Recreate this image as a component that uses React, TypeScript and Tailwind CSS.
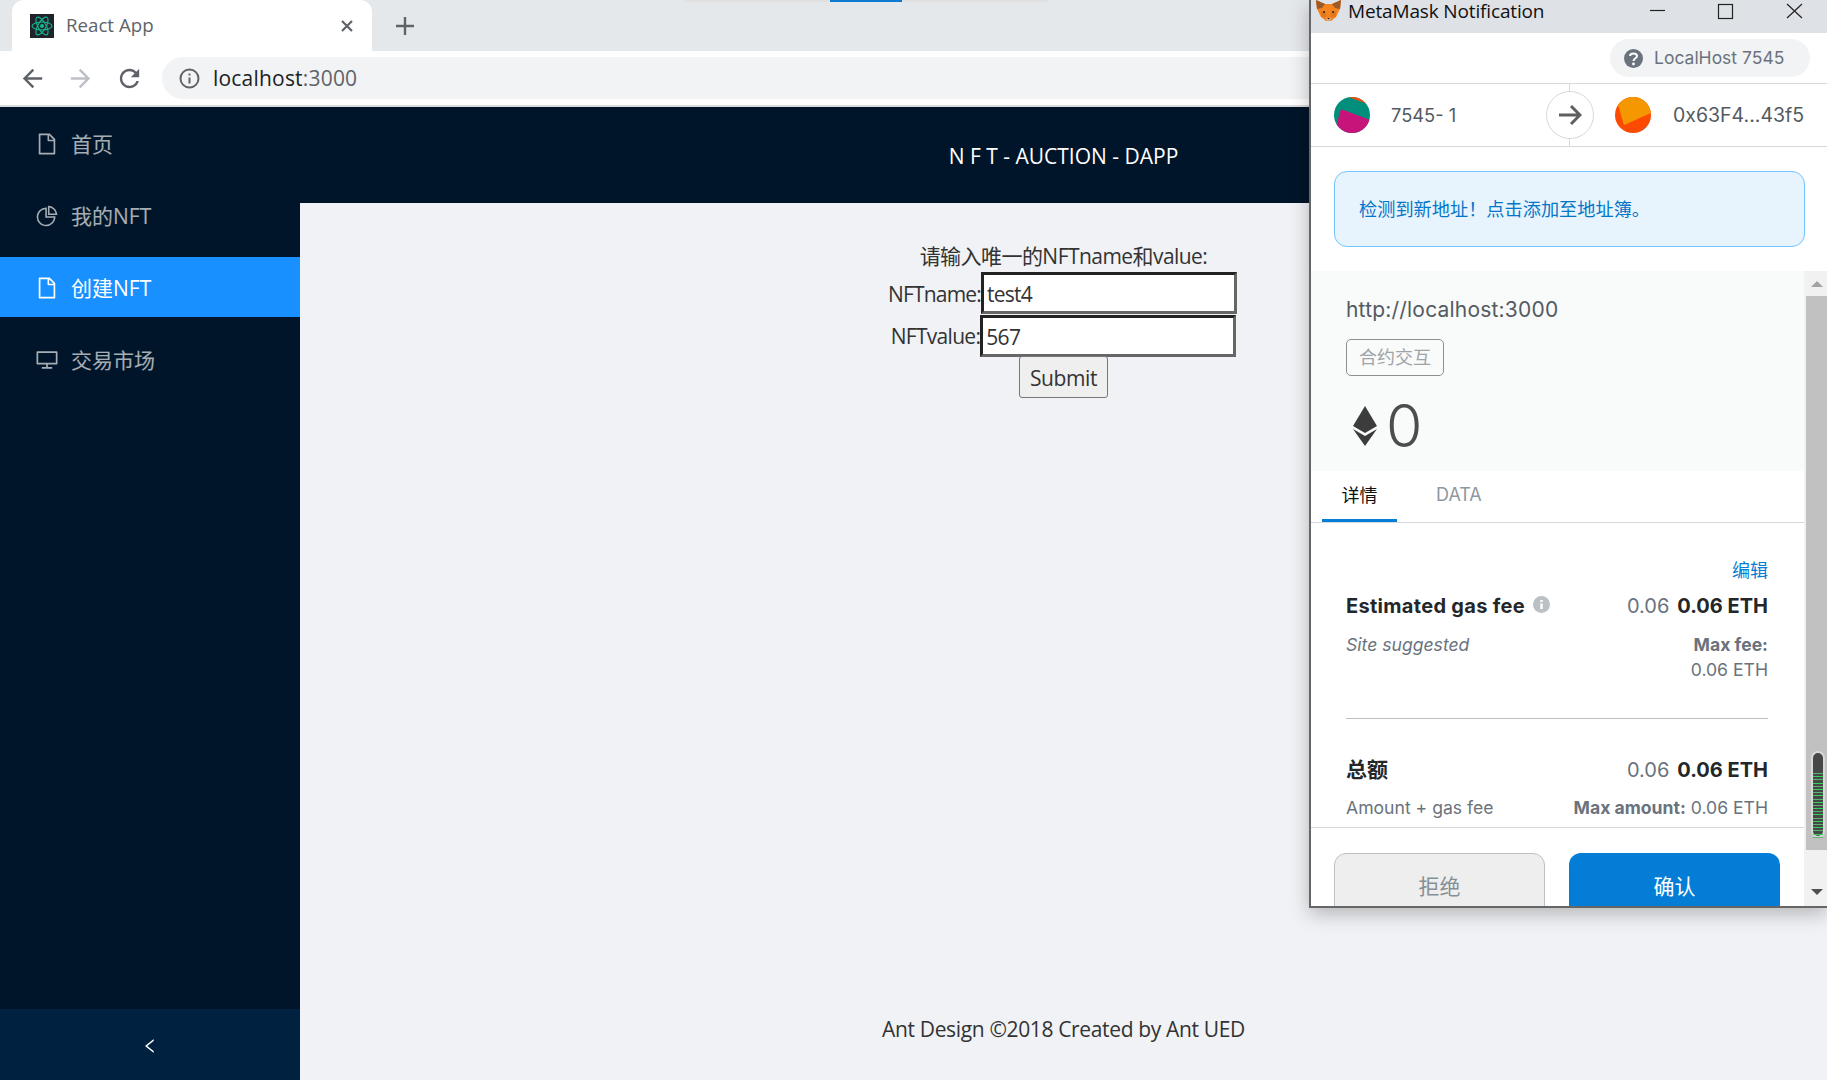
import React from "react";
import { AiOutlineFile, AiOutlinePieChart, AiOutlineDesktop, AiOutlineLeft } from "react-icons/ai";

const ui = "font-['Open_Sans','Noto_Sans_CJK_SC',sans-serif]";
const mm = "font-['Inter','Noto_Sans_CJK_SC',sans-serif]";

function ReactLogo() {
  return (
    <svg width="24" height="24" viewBox="0 0 24 24" className="shrink-0">
      <rect width="24" height="24" fill="#20232a" />
      <g fill="none" stroke="#14b88f" strokeWidth="1.1">
        <ellipse cx="12" cy="12" rx="10" ry="4" />
        <ellipse cx="12" cy="12" rx="10" ry="4" transform="rotate(60 12 12)" />
        <ellipse cx="12" cy="12" rx="10" ry="4" transform="rotate(120 12 12)" />
      </g>
      <circle cx="12" cy="12" r="2" fill="#14b88f" />
    </svg>
  );
}

function Fox() {
  return (
    <svg width="25" height="22" viewBox="0 0 25 22" className="shrink-0">
      <path d="M0 0 L9 4 H16 L25 0 L24 9 L20 17 L15 21 H10 L5 17 L1 9 Z" fill="#f5841f" />
      <path d="M0 0 L9 4 L6 8 L1 9 Z M25 0 L16 4 L19 8 L24 9 Z" fill="#9c5a24" />
      <path d="M5 11 L10 13 L10.5 17 L5 17 Z M20 11 L15 13 L14.5 17 L20 17 Z" fill="#e2761b" />
      <path d="M10 18 H15 L14 20.5 H11 Z" fill="#d7c1b3" />
      <path d="M11 18 H14 L12.5 19.5 Z" fill="#23262a" />
      <circle cx="8" cy="12" r="1" fill="#23262a" />
      <circle cx="17" cy="12" r="1" fill="#23262a" />
    </svg>
  );
}

function ChromeBar() {
  return (
    <header className="shrink-0">
      <div className="relative flex h-[51px] items-end bg-[#e5e8eb] pl-3">
        <div className="absolute left-[685px] top-0 h-[2px] w-[363px] bg-[#e0e0e0]" />
        <div className="absolute left-[830px] top-0 h-[2px] w-[72px] bg-[#0b7ad1]" />
        <div className={`flex h-[51px] w-[360px] items-center rounded-t-xl bg-white pl-[18px] pr-[18px] ${ui}`}>
          <ReactLogo />
          <span className="ml-3 flex-1 text-[18.7px] text-[#5f6368]">React App</span>
          <svg width="14" height="14" viewBox="0 0 14 14" stroke="#5f6368" strokeWidth="2.2">
            <path d="M2 2 L12 12 M12 2 L2 12" />
          </svg>
        </div>
        <div className="flex h-[51px] w-[66px] items-center justify-center">
          <svg width="20" height="20" viewBox="0 0 20 20" stroke="#5f6368" strokeWidth="2.4">
            <path d="M10 1 V19 M1 10 H19" />
          </svg>
        </div>
      </div>
      <div className="flex h-[54px] items-center bg-white pl-[18px]">
        <svg width="29" height="29" viewBox="0 0 24 24" fill="#5f6368">
          <path d="M20 11H7.83l5.59-5.59L12 4l-8 8 8 8 1.41-1.41L7.83 13H20v-2z" />
        </svg>
        <svg width="29" height="29" viewBox="0 0 24 24" fill="#bdc1c6" className="ml-[19px]">
          <path d="M4 11h12.17l-5.59-5.59L12 4l8 8-8 8-1.41-1.41L16.17 13H4v-2z" />
        </svg>
        <svg width="29" height="29" viewBox="0 0 24 24" fill="#5f6368" className="ml-[20px]">
          <path d="M17.65 6.35C16.2 4.9 14.21 4 12 4c-4.42 0-7.99 3.58-7.99 8s3.57 8 7.99 8c3.73 0 6.84-2.55 7.73-6h-2.08c-.82 2.33-3.04 4-5.65 4-3.31 0-6-2.69-6-6s2.69-6 6-6c1.66 0 3.14.69 4.22 1.78L13 11h7V4l-2.35 2.35z" />
        </svg>
        <div className={`ml-[18px] flex h-[42px] flex-1 items-center rounded-full bg-[#f1f3f4] pl-[17px] ${ui}`}>
          <svg width="21" height="21" viewBox="0 0 21 21" fill="none" stroke="#5f6368" strokeWidth="2">
            <circle cx="10.5" cy="10.5" r="9" />
            <path d="M10.5 9.5 V15.5 M10.5 5.5 V7.5" />
          </svg>
          <span className="ml-[13px] pt-[2px] text-[21px] tracking-[0.2px] text-[#202124]">
            localhost<span className="text-[#5f6368]">:3000</span>
          </span>
        </div>
      </div>
      <div className="h-[2px] bg-[#dcdcdc]" />
    </header>
  );
}

const menu = [
  { label: "首页", Icon: AiOutlineFile, active: false },
  { label: "我的NFT", Icon: AiOutlinePieChart, active: false },
  { label: "创建NFT", Icon: AiOutlineFile, active: true },
  { label: "交易市场", Icon: AiOutlineDesktop, active: false },
];

function Sidebar() {
  return (
    <aside className={`flex w-[300px] shrink-0 flex-col bg-[#001529] ${ui}`}>
      <nav className="flex flex-1 flex-col gap-3 pt-[6px]">
        {menu.map(({ label, Icon, active }) => (
          <div
            key={label}
            className={`flex h-[60px] items-center pl-[35px] pt-[2px] text-[21px] ${active ? "bg-[#1890ff] text-white" : "text-white/65"}`}
          >
            <Icon size={24} className="mr-[12px] shrink-0" />
            <span className="pt-[2px]">{label}</span>
          </div>
        ))}
      </nav>
      <div className="flex h-[71px] items-center justify-center bg-[#002140] pt-[2px] text-white">
        <AiOutlineLeft size={18} />
      </div>
    </aside>
  );
}

function Content() {
  const input =
    "h-[42px] w-[256px] border-[3px] border-t-[#222] border-l-[#222] border-b-[#666] border-r-[#666] bg-white pl-[3px] pt-[1px] text-[21px] text-[#333] outline-none";
  return (
    <main className={`flex min-w-0 flex-1 flex-col bg-[#f0f2f5] text-[21px] text-[#333] ${ui}`}>
      <div className="flex h-24 shrink-0 items-center justify-center bg-[#001529] pt-[4px] text-white">N F T - AUCTION - DAPP</div>
      <form className="flex flex-1 flex-col items-center pt-[38px]">
        <div className="h-[31px] leading-[31px] tracking-[-0.55px]">请输入唯一的NFTname和value:</div>
        <label className="mr-[2px] flex h-[43px] items-start tracking-[-0.8px]">
          <span className="pt-[1px] leading-[42px]">NFTname:</span>
          <input className={input} defaultValue="test4" />
        </label>
        <label className="flex h-[41px] items-start tracking-[-0.7px]">
          <span className="leading-[42px]">NFTvalue:</span>
          <input className={input} defaultValue="567" />
        </label>
        <button
          type="button"
          className="h-[42px] w-[89px] rounded-[3px] border-[1.5px] border-[#767676] bg-[#efefef] pt-[3px] tracking-[-0.4px]"
        >
          Submit
        </button>
      </form>
      <footer className="flex h-[100px] shrink-0 items-center justify-center tracking-[-0.35px]">Ant Design ©2018 Created by Ant UED</footer>
    </main>
  );
}

function AvatarA() {
  return (
    <svg width="36" height="36" viewBox="0 0 36 36" className="shrink-0">
      <clipPath id="a"><circle cx="18" cy="18" r="18" /></clipPath>
      <g clipPath="url(#a)">
        <rect width="36" height="36" fill="#018e7b" />
        <path d="M14 0 H36 V8 L20 2 Z" fill="#f14e13" />
        <path d="M7 12 L36 23 V36 H0 Z" fill="#c7147a" />
      </g>
    </svg>
  );
}

function AvatarB() {
  return (
    <svg width="36" height="36" viewBox="0 0 36 36" className="shrink-0">
      <clipPath id="b"><circle cx="18" cy="18" r="18" /></clipPath>
      <g clipPath="url(#b)">
        <rect width="36" height="36" fill="#fc4a00" />
        <path d="M36 26 V36 H24 Z" fill="#2a7fc9" />
        <path d="M0 -2 H38 V15 L9 28 Z" fill="#f59700" />
      </g>
    </svg>
  );
}

function Amount() {
  return (
    <div className="flex items-center text-[20px]">
      <span className="text-[#6a737d]">0.06</span>
      <span className="ml-2 font-bold text-[#24272a]">0.06 ETH</span>
    </div>
  );
}

function Scrollbar() {
  return (
    <div className="relative flex w-[23px] shrink-0 flex-col bg-[#f1f1f1]">
      <div className="flex h-[25px] items-center justify-center pl-[2px]">
        <div className="h-0 w-0 border-x-[6px] border-b-[6px] border-x-transparent border-b-[#a3a3a3]" />
      </div>
      <div className="ml-[2px] flex-1 bg-[#c1c1c1]" />
      <div className="flex h-[56px] items-end justify-center pb-[11px] pl-[2px]">
        <div className="h-0 w-0 border-x-[6px] border-t-[6px] border-x-transparent border-t-[#505050]" />
      </div>
      <div className="absolute left-[7px] top-[480px] flex h-[87px] w-[14px] flex-col items-center gap-[2.2px] rounded-full border-2 border-[#d9d9d9] bg-[#474747] pt-[20px]">
        {Array.from({ length: 21 }).map((_, i) => (
          <div key={i} className={`h-[1px] w-[10px] shrink-0 ${i % 2 ? "bg-[#2fd35a]" : "bg-[#55b56e]"}`} />
        ))}
      </div>
    </div>
  );
}

function Popup() {
  return (
    <div className={`absolute left-[1309px] top-0 flex h-[908px] w-[518px] flex-col overflow-hidden border-b-2 border-l-2 border-[#666] bg-white shadow-[0_6px_18px_rgba(0,0,0,0.25)] ${mm}`}>
      <div className={`flex h-[33px] shrink-0 items-start bg-[#dee1e6] pl-[5px] ${ui}`}>
        <Fox />
        <span className="ml-[7px] text-[19px] leading-[22px] tracking-[-0.15px] text-[#111]">MetaMask Notification</span>
        <svg width="180" height="22" viewBox="0 0 180 22" className="ml-auto" fill="none" stroke="#222" strokeWidth="1.2">
          <path d="M3 10.5 H18" />
          <rect x="71.5" y="4.5" width="14" height="14" />
          <path d="M140 4 L155 18 M155 4 L140 18" />
        </svg>
      </div>
      <div className="flex h-[51px] shrink-0 items-center justify-end border-b border-[#d6d9dc] pr-[17px]">
        <div className="flex h-[38px] w-[200px] items-center rounded-full bg-[#f2f3f4] pl-[14px]">
          <svg width="19" height="19" viewBox="0 0 19 19" className="shrink-0">
            <circle cx="9.5" cy="9.5" r="9.5" fill="#6a737d" />
            <path d="M6 7 C6 3.5 13 3.5 13 7 C13 9.5 9.5 9 9.5 12" fill="none" stroke="#fff" strokeWidth="2" />
            <circle cx="9.5" cy="15" r="1.4" fill="#fff" />
          </svg>
          <span className="ml-[11px] pt-[1px] text-[17.5px] text-[#6a737d]">LocalHost 7545</span>
        </div>
      </div>
      <div className="relative flex h-[63px] shrink-0 items-center border-b border-[#d6d9dc] pl-[23px]">
        <AvatarA />
        <span className="ml-[21px] w-[224px] pt-[1px] text-[18.3px] text-[#535a61]">7545- 1</span>
        <AvatarB />
        <span className="ml-[22px] pt-[1px] text-[19.5px] text-[#535a61]">0x63F4...43f5</span>
        <div className="absolute left-[258px] top-0 h-full w-px bg-[#d6d9dc]" />
        <div className="absolute left-[235px] top-[7px] flex h-[48px] w-[48px] items-center justify-center rounded-full border border-[#d6d9dc] bg-white">
          <svg width="24" height="22" viewBox="0 0 24 22" fill="none" stroke="#5f5f5f" strokeWidth="3">
            <path d="M1 11 H22 M13 2 L22 11 L13 20" />
          </svg>
        </div>
      </div>
      <div className="h-[124px] shrink-0 px-[23px] pt-[24px]">
        <div className="flex h-[76px] w-[471px] items-center rounded-[13px] border border-[#75c4fd] bg-[#e8f4fd] pl-[24px] pt-[1px] text-[18.2px] text-[#0376c9]">
          检测到新地址！点击添加至地址簿。
        </div>
      </div>
      <div className="flex min-h-0 flex-1">
        <div className="flex min-w-0 flex-1 flex-col">
          <section className="h-[200px] shrink-0 bg-[#f9fafa] pl-[35px] pt-[24px]">
            <div className="text-[21px] leading-[30px] tracking-[0.2px] text-[#535a61]">http://localhost:3000</div>
            <div className="mt-[14px] flex h-[37px] w-[98px] items-center justify-center rounded-[5px] border border-[#8f8f8f] text-[18px] text-[#a0a4a8]">
              合约交互
            </div>
            <div className="mt-[14px] flex h-[66px] items-center pl-[7px] pt-[5px]">
              <svg width="24" height="40" viewBox="0 0 24 40" className="shrink-0">
                <path d="M12 0 L24 20 L12 27 L0 20 Z" fill="#3c3c3d" />
                <path d="M0 23 L12 30 L24 23 L12 40 Z" fill="#3c3c3d" />
              </svg>
              <span className="ml-[9px] text-[59px] font-light leading-[58px] text-[#4d4d4d]">0</span>
            </div>
          </section>
          <div className="flex h-[52px] shrink-0 border-b border-[#d6d9dc] pl-[11px] text-[18px]">
            <div className="flex h-[51px] w-[75px] items-center justify-center border-b-[3px] border-[#037dd6] text-[#111]">详情</div>
            <div className="ml-[39px] flex h-[46px] items-center text-[#8f97a0]">DATA</div>
          </div>
          <div className="h-[304px] shrink-0 pl-[35px] pr-[36px] pt-[36px]">
            <div className="h-[24px] text-right text-[18px] leading-[24px] text-[#037dd6]">编辑</div>
            <div className="mt-[11px] flex h-[24px] items-center justify-between">
              <div className="flex items-center text-[20px] font-bold tracking-[0.3px] text-[#24272a]">
                Estimated gas fee
                <svg width="17" height="17" viewBox="0 0 17 17" className="mb-1 ml-2">
                  <circle cx="8.5" cy="8.5" r="8.5" fill="#bbc0c5" />
                  <path d="M8.5 7.5 V13 M8.5 4 V6" stroke="#fff" strokeWidth="2.4" />
                </svg>
              </div>
              <Amount />
            </div>
            <div className="mt-[14px] flex justify-between text-[17.6px] leading-[25px] text-[#6a737d]">
              <span className="italic">Site suggested</span>
              <div className="text-right">
                <div className="font-bold">Max fee:</div>
                <div>0.06 ETH</div>
              </div>
            </div>
            <div className="mt-[36px] h-px bg-[#bbc0c5]" />
            <div className="mt-[39px] flex h-[24px] items-center justify-between">
              <span className="text-[21px] font-bold text-[#24272a]">总额</span>
              <Amount />
            </div>
            <div className="mt-[14px] flex justify-between text-[17.6px] leading-[24px] text-[#6a737d]">
              <span>Amount + gas fee</span>
              <span><b>Max amount:</b> 0.06 ETH</span>
            </div>
          </div>
          <div className="flex flex-1 gap-6 overflow-hidden border-t border-[#d6d9dc] pl-[23px] pt-[25px] text-[21px]">
            <div className="flex h-[68px] w-[211px] shrink-0 items-center justify-center rounded-t-[12px] border border-[#bbc0c5] bg-[#eeeeee] text-[#868e96]">拒绝</div>
            <div className="flex h-[68px] w-[211px] shrink-0 items-center justify-center rounded-t-[12px] bg-[#037dd6] text-white">确认</div>
          </div>
        </div>
        <Scrollbar />
      </div>
    </div>
  );
}

export default function App() {
  return (
    <div className="relative flex h-[1080px] w-[1827px] flex-col overflow-hidden bg-[#f0f2f5]">
      <ChromeBar />
      <div className="flex min-h-0 flex-1">
        <Sidebar />
        <Content />
      </div>
      <Popup />
    </div>
  );
}
